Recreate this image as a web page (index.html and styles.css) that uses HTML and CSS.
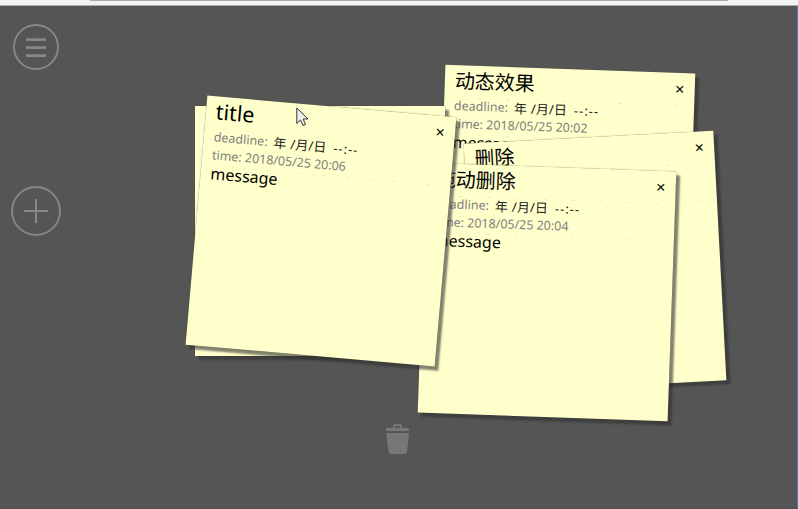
FILE: index.html
```html
<!DOCTYPE html>
<html lang="zh-CN">
<head>
<meta charset="utf-8">
<title>Notes</title>
<link rel="stylesheet" href="styles.css">
</head>
<body>
<header class="topbar"><div class="topbar-line"></div></header>
<main class="board">
  <nav class="tools">
    <svg class="menu" width="46" height="46" viewBox="0 0 46 46"><circle cx="23" cy="23" r="22"/><path d="M14 15.600h18M14 23.600h18M14 31.600h18"/></svg>
    <svg class="add" width="50" height="50" viewBox="0 0 50 50"><circle cx="25" cy="25" r="24"/><path d="M13 25h24M25 13v24"/></svg>
  </nav>
  <svg class="trash" width="24" height="31" viewBox="0 0 24 31"><path d="M1 4h6V2q0-2 2-2h5q2 0 2 2v2h6q1 0 1 1v2H0V5q0-1 1-1zM9 4h5V2H9zM0 9h23l-2 19q-.3 2-2 2H5q-2 0-2.300-2z" fill-rule="evenodd"/></svg>

  <section class="note note-effect">
    <button class="close">×</button>
    <h2>动态效果</h2>
    <div class="row">deadline:<span class="date"><i>年</i><i>/</i><i>月</i><i>/</i><i>日</i><i class="clock">--:--</i></span></div>
    <div class="row time">time: 2018/05/25 20:02</div>
    <p>message</p>
  </section>
  <section class="note note-blank"></section>
  <section class="note note-remove">
    <button class="close">×</button>
    <h2>删除</h2>
  </section>
  <section class="note note-drag">
    <button class="close">×</button>
    <h2>拖动删除</h2>
    <div class="row">deadline:<span class="date"><i>年</i><i>/</i><i>月</i><i>/</i><i>日</i><i class="clock">--:--</i></span></div>
    <div class="row time">time: 2018/05/25 20:04</div>
    <p>message</p>
  </section>
  <section class="note note-title">
    <button class="close">×</button>
    <h2 class="latin">title</h2>
    <div class="row">deadline:<span class="date"><i>年</i><i>/</i><i>月</i><i>/</i><i>日</i><i class="clock">--:--</i></span></div>
    <div class="row time">time: 2018/05/25 20:06</div>
    <p>message</p>
  </section>
  <svg class="cursor" width="13" height="20" viewBox="0 0 13 20"><path d="M.8 1v15.500l3.700-3.500 2.500 5.500 2.500-1-2.300-5.500h4.800z"/></svg>
</main>
</body>
</html>
```
FILE: styles.css
```css
* { box-sizing: border-box; }
body {
  margin: 0;
  height: 509px;
  overflow: hidden;
  display: flex;
  flex-direction: column;
  background: #555;
  font-family: "Noto Sans", "Noto Sans CJK SC", sans-serif;
}
.topbar { height: 6px; background: #f1f2f2; border-bottom: 1px solid #aaa; }
.topbar-line { width: 638px; height: 1px; margin-left: 90px; background: #aaa; }
.board {
  position: relative;
  flex: 1;
  border-right: 1px solid #3f80a8;
  border-bottom: 1px solid #514f50;
}
.tools { display: flex; flex-direction: column; align-items: center; width: 72px; padding-top: 18px; gap: 116px; }
.tools svg { fill: none; stroke: #888; stroke-width: 1.8; }
.menu path { stroke-width: 2.6; stroke-linecap: round; }
.add path { stroke-width: 2; }
.trash { position: absolute; left: 386px; top: 418px; fill: #777; }
.note {
  position: absolute;
  width: 250px;
  height: 250px;
  padding: 2px 10px;
  background: #ffffcc;
  box-shadow: 4px 4px 2px rgba(48, 48, 48, .6), 0 0 1px rgba(60, 60, 40, .8);
}
.note:not(.note-blank)::before {
  content: "";
  position: absolute;
  left: 10px;
  right: 10px;
  top: 32px;
  height: 36px;
  border: solid rgba(160, 160, 110, .2);
  border-width: 1px 0;
  -webkit-mask: repeating-linear-gradient(90deg, transparent 0 24px, #000 24px 28px);
  mask: repeating-linear-gradient(90deg, transparent 0 24px, #000 24px 28px);
}
.note-title::before {
  -webkit-mask: repeating-linear-gradient(90deg, transparent 0 9px, #000 9px 11.500px) !important;
  mask: repeating-linear-gradient(90deg, transparent 0 9px, #000 9px 11.500px) !important;
}
.note-blank { left: 195px; top: 100px; }
.note-effect { left: 440.600px; top: 63.300px; transform: rotate(2deg); }
.note-remove { left: 469.700px; top: 131.400px; transform: rotate(-3deg); }
.note-drag { left: 422.400px; top: 160.500px; transform: rotate(2deg); }
.note-title { left: 196.300px; top: 99.900px; transform: rotate(5deg); }
.close {
  position: absolute;
  left: 225px;
  top: 5.500px;
  width: 20px;
  height: 20px;
  padding: 0;
  border: 0;
  background: none;
  color: #000;
  font: 16px/20px "Noto Sans", sans-serif;
}
h2 { margin: 0; font-size: 20px; font-weight: 400; line-height: 28px; height: 30px; color: #000; }
h2.latin { font-size: 21.500px; line-height: 26px; }
.row { display: flex; height: 18px; line-height: 18px; font-size: 12.500px; color: #808080; white-space: nowrap; }
.date { display: grid; grid-template-columns: 17px 5px 13px 5px 20px auto; margin-left: 6px; color: #222; }
.date i { font-style: normal; font-size: 13px; }
.date .clock { letter-spacing: 1px; }
.time { letter-spacing: -.03px; }
p { margin: 0; font-size: 16px; line-height: 18px; color: #000; }
.cursor { position: absolute; left: 296px; top: 101px; fill: #eee; stroke: #333; stroke-width: 1; }
```
